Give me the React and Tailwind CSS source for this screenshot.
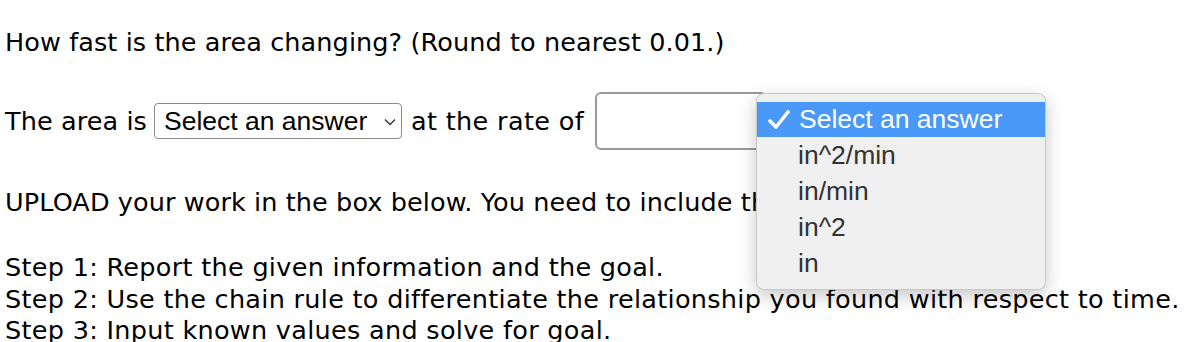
import React from "react";

const options = ["in^2/min", "in/min", "in^2", "in"];

const App = () => {
  return (
    <div className="relative w-[1198px] h-[342px] overflow-hidden bg-white text-black font-['DejaVu_Sans',sans-serif] text-[25.5px] tracking-[0.1px] leading-[31px]">
      <div className="pt-[27px] pl-[5px]">
        <p className="whitespace-nowrap">How fast is the area changing? (Round to nearest 0.01.)</p>

        <div className="mt-[34px] flex items-center h-[58px] whitespace-nowrap">
          <span>The area is</span>
          <div className="ml-[7px] flex items-center h-[36px] w-[248px] border border-[#8a8a8a] rounded-[4px] pl-[9px] pr-[5px] font-['Liberation_Sans',sans-serif] text-[26.5px] tracking-normal">
            <span className="flex-1">Select an answer</span>
            <svg width="12" height="8" viewBox="0 0 12 8" className="mt-[2px]">
              <path d="M1 1.5 L6 6.5 L11 1.5" fill="none" stroke="#333" strokeWidth="1.4" />
            </svg>
          </div>
          <span className="ml-[9px] tracking-[0.35px]">at the rate of</span>
          <div className="ml-[11px] h-[58px] w-[172px] border-2 border-[#9a9a9a] rounded-[6px] bg-white" />
        </div>

        <p className="mt-[37px] whitespace-nowrap">
          UPLOAD your work in the box below. You need to include the following steps.
        </p>

        <div className="mt-[34px] leading-[31.5px] tracking-[0.3px] whitespace-nowrap">
          <p>Step 1: Report the given information and the goal.</p>
          <p>Step 2: Use the chain rule to differentiate the relationship you found with respect to time.</p>
          <p>Step 3: Input known values and solve for goal.</p>
        </div>
      </div>

      <div className="absolute left-[756px] top-[93px] w-[290px] h-[197px] rounded-[8px] bg-[#f0f0f0] border border-[#c8c8c8] shadow-[0_6px_18px_rgba(0,0,0,0.22)] pt-[8px] font-['Liberation_Sans',sans-serif] text-[26.5px] tracking-normal">
        <div className="flex items-center h-[35px] bg-[#4a98f7] text-white">
          <svg width="22" height="20" viewBox="0 0 22 20" className="ml-[11px] mr-[9px]">
            <path d="M2 11 L8 17 L20 2" fill="none" stroke="#fff" strokeWidth="3.6" strokeLinecap="round" strokeLinejoin="round" />
          </svg>
          <span>Select an answer</span>
        </div>
        {options.map((o) => (
          <div key={o} className="flex items-center h-[36px] pl-[41px] text-[#333]">
            {o}
          </div>
        ))}
      </div>
    </div>
  );
};

export default App;
